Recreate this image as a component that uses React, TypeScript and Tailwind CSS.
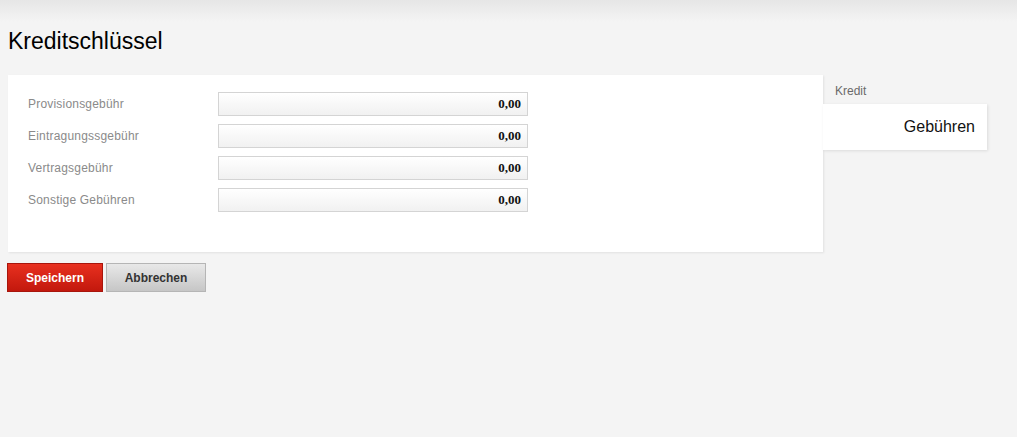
const fields = [
  'Provisionsgebühr',
  'Eintragungssgebühr',
  'Vertragsgebühr',
  'Sonstige Gebühren',
];

export default function App() {
  return (
    <div className="min-h-[437px] bg-[#f4f4f4] font-['Liberation_Sans',Arial,sans-serif] bg-[linear-gradient(to_bottom,#e6e6e6_0px,#f4f4f4_22px)]">
      <div className="px-2 pt-[28px]">
        <h1 className="text-[23px] leading-[26px] text-black">Kreditschlüssel</h1>

        <div className="flex mt-[21px]">
          {/* main form card */}
          <div className="w-[815px] shrink-0">
            <div className="bg-white h-[177px] pt-[17px] pl-[20px] shadow-[1px_1px_2px_rgba(0,0,0,0.08)]">
              <div className="flex flex-col gap-2">
                {fields.map((label) => (
                  <div key={label} className="flex items-center h-6">
                    <label className="w-[190px] text-[12px] text-[#8a8a8a] tracking-[0.2px]">{label}</label>
                    <div className="w-[310px] h-6 border border-[#d4d4d4] bg-[linear-gradient(to_bottom,#ffffff,#f1f1f1)] flex items-center justify-end pr-[6px]">
                      <span className="font-['Liberation_Serif',serif] font-bold text-[13px] text-[#111]">0,00</span>
                    </div>
                  </div>
                ))}
              </div>
            </div>

            <div className="flex gap-[3px] mt-[11px] -ml-px">
              <button className="w-[96px] h-[29px] border border-[#a8150c] bg-[linear-gradient(to_bottom,#e8301f,#c2180d)] text-white text-[12px] font-bold">
                Speichern
              </button>
              <button className="w-[100px] h-[29px] border border-[#b5b5b5] bg-[linear-gradient(to_bottom,#e8e8e8,#c6c6c6)] text-[#333] text-[12px] font-bold">
                Abbrechen
              </button>
            </div>
          </div>

          {/* side tabs */}
          <div className="w-[164px] pt-[9px]">
            <div className="pl-[12px] text-[12px] text-[#6a6a6a] h-[20px] leading-[14px]">Kredit</div>
            <div className="bg-white h-[46px] flex items-center justify-end pr-[12px] text-[16px] text-[#111] shadow-[1px_1px_3px_rgba(0,0,0,0.1)]">
              Gebühren
            </div>
          </div>
        </div>
      </div>
    </div>
  );
}
